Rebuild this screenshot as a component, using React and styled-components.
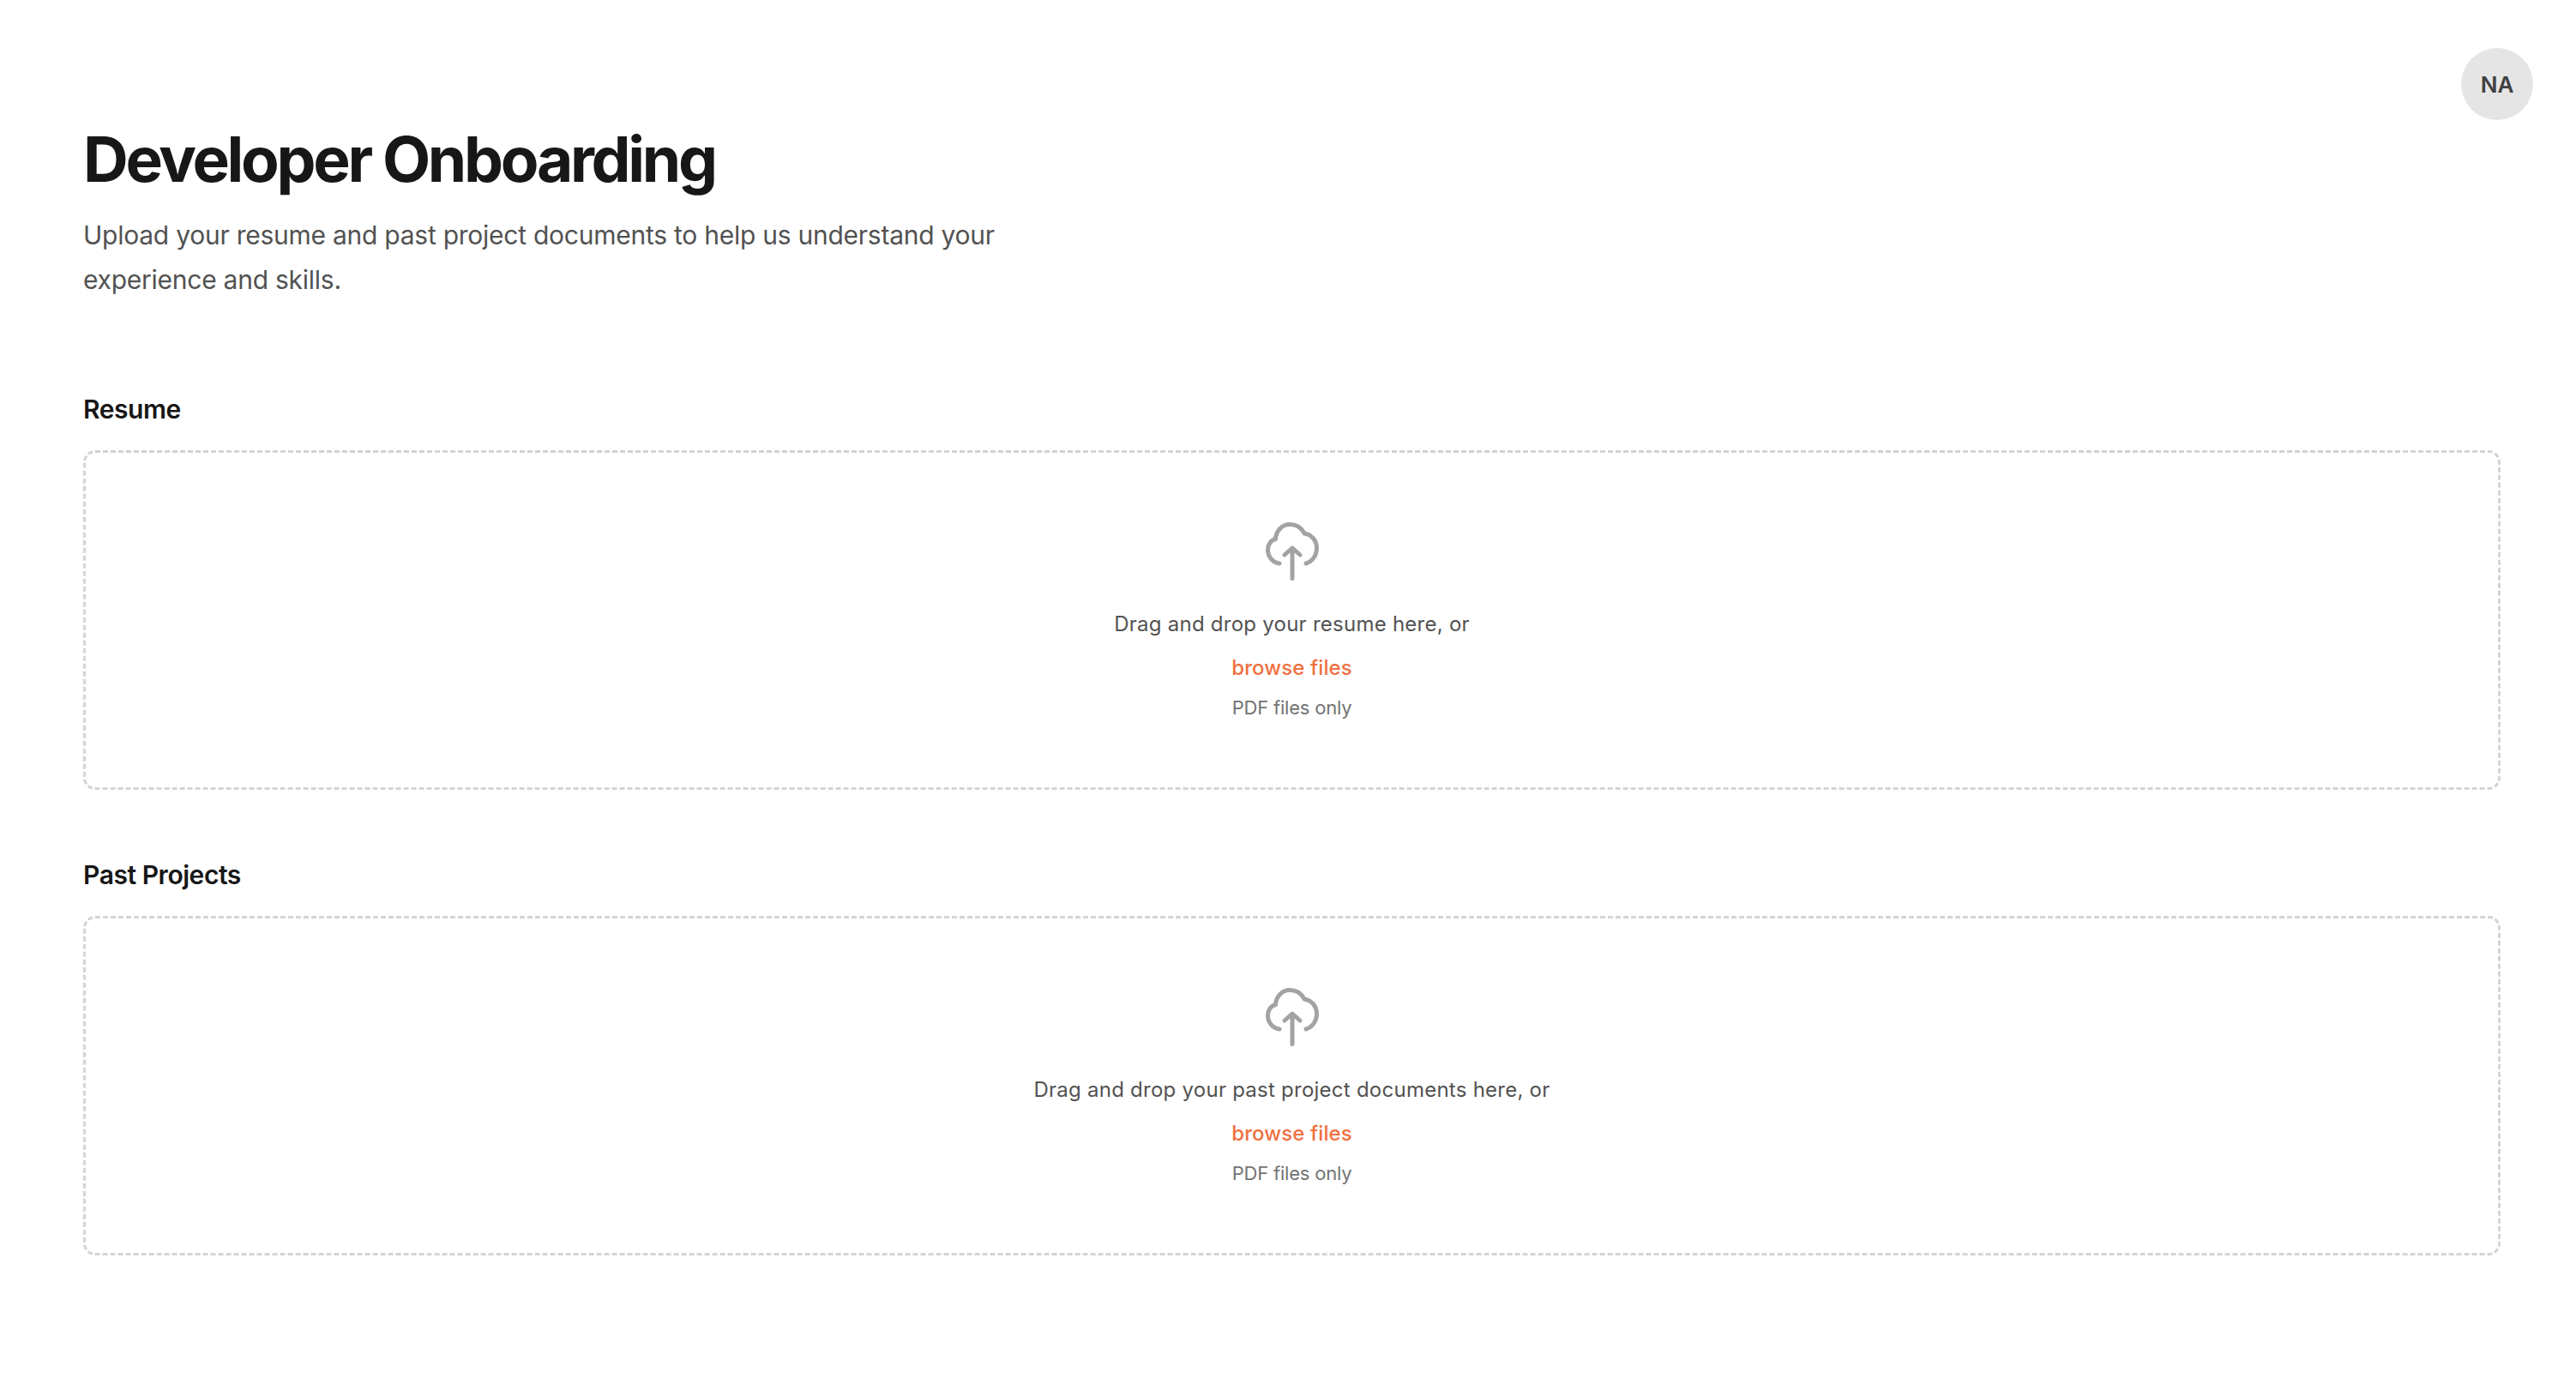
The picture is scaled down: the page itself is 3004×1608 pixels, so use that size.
import React from 'react';
import styled, { createGlobalStyle } from 'styled-components';

const sections = [
  { title: 'Resume', hint: 'Drag and drop your resume here, or' },
  { title: 'Past Projects', hint: 'Drag and drop your past project documents here, or' },
];

function UploadIcon() {
  return (
    <IconSvg viewBox="0 0 72 72" fill="none" stroke="#a3a3a3" strokeWidth="5" strokeLinecap="round" strokeLinejoin="round">
      <path d="M21 51C13 50 7.5 43 7.5 35C7.5 29 11 24 16.5 22.5C17 13 24 5.5 33 5.5C41 5.5 47 10 50 16C58 17 64.5 24 64.5 33C64.5 42 59 49 52 51" />
      <path d="M36 68.5V33M27 41L36 33L45 41" />
    </IconSvg>
  );
}

export default function App() {
  return (
    <>
      <GlobalStyle />
      <Page>
        <Avatar>NA</Avatar>
        <Title>Developer Onboarding</Title>
        <Subtitle>
          Upload your resume and past project documents to help us understand your experience and skills.
        </Subtitle>
        {sections.map((section) => (
          <Section key={section.title}>
            <SectionTitle>{section.title}</SectionTitle>
            <DropZone>
              <UploadIcon />
              <Hint>{section.hint}</Hint>
              <Browse>browse files</Browse>
              <Note>PDF files only</Note>
            </DropZone>
          </Section>
        ))}
      </Page>
    </>
  );
}

const GlobalStyle = createGlobalStyle`
  html, body {
    margin: 0;
    background: #ffffff;
  }

  * {
    box-sizing: border-box;
  }
`;

const Page = styled.div`
  position: relative;
  min-height: 1608px;
  padding: 136px 88px 0 97px;
  font-family: Inter, "Liberation Sans", sans-serif;
`;

const Avatar = styled.div`
  position: absolute;
  top: 56px;
  right: 50px;
  width: 84px;
  height: 84px;
  border-radius: 50%;
  background: #e5e5e5;
  color: #404040;
  font-size: 26px;
  font-weight: 600;
  display: flex;
  align-items: center;
  justify-content: center;
`;

const Title = styled.h1`
  margin: 0;
  font-size: 73px;
  line-height: 100px;
  font-weight: 700;
  letter-spacing: -3.3px;
  color: #171717;
`;

const Subtitle = styled.p`
  margin: 12px 0 0;
  max-width: 1110px;
  font-size: 30px;
  line-height: 52px;
  font-weight: 400;
  letter-spacing: -0.25px;
  color: #525252;
`;

const Section = styled.section`
  margin-top: 103px;

  & + & {
    margin-top: 77px;
  }
`;

const SectionTitle = styled.h2`
  margin: 0 0 26px;
  font-size: 30px;
  line-height: 44px;
  font-weight: 600;
  letter-spacing: -0.45px;
  color: #171717;
`;

const DropZone = styled.div`
  height: 396px;
  border: 3px dashed #d4d4d4;
  border-radius: 14px;
  padding-top: 78px;
  display: flex;
  flex-direction: column;
  align-items: center;
`;

const IconSvg = styled.svg`
  width: 72px;
  height: 72px;
  flex: none;
`;

const Hint = styled.div`
  margin-top: 30px;
  font-size: 24px;
  line-height: 40px;
  letter-spacing: 0.25px;
  color: #525252;
`;

const Browse = styled.div`
  margin-top: 11px;
  font-size: 24px;
  line-height: 40px;
  font-weight: 500;
  letter-spacing: 0.1px;
  color: #f0703f;
`;

const Note = styled.div`
  margin-top: 10px;
  font-size: 22px;
  line-height: 32px;
  letter-spacing: -0.2px;
  color: #737373;
`;
